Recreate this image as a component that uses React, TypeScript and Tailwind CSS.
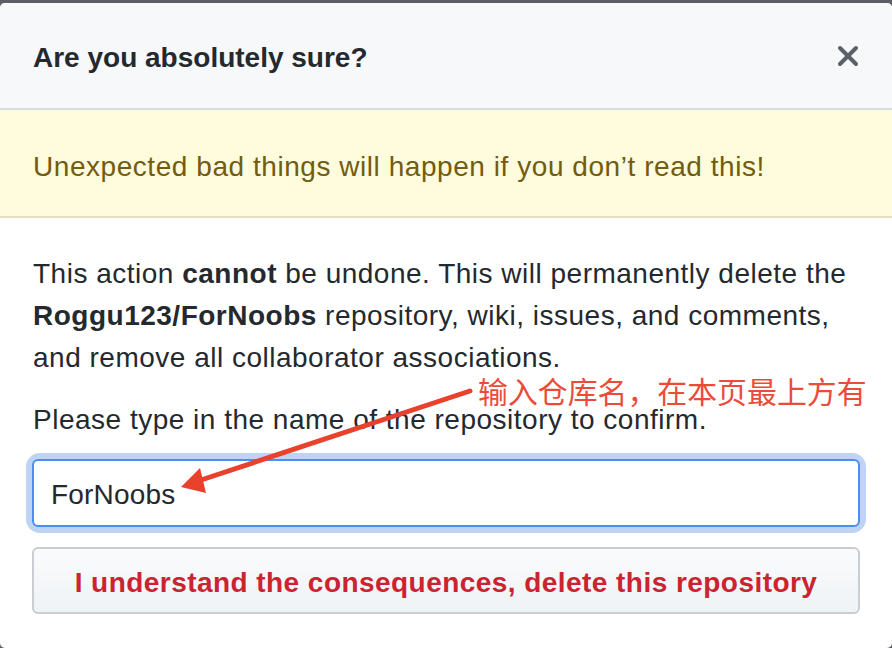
import { X } from "lucide-react";

const font = {
  fontFamily: '"Liberation Sans", Arial, "Noto Sans CJK SC", sans-serif',
};

export default function App() {
  return (
    <div className="relative h-[648px] w-[892px] overflow-hidden bg-[#5b5f64]" style={font}>
      <div className="mt-[3px] flex h-[645px] flex-col overflow-hidden rounded-[5px] bg-white text-[28px] leading-[42px] text-[#24292e]">
        {/* Header */}
        <div className="flex h-[107px] shrink-0 items-center justify-between border-b-2 border-[#d9dce0] bg-[#f6f8fa] pl-[33px] pr-[28px] pt-[4px]">
          <h3 className="font-bold">Are you absolutely sure?</h3>
          <X className="-mt-[4px] text-[#586069]" size={32} strokeWidth={3} />
        </div>

        {/* Flash warning */}
        <div className="flex h-[108px] shrink-0 items-center border-b-2 border-[#e2dfc4] bg-[#fffbdd] px-[33px] pt-[8px] tracking-[0.55px] text-[#735c0f]">
          Unexpected bad things will happen if you don’t read this!
        </div>

        {/* Body */}
        <div className="flex flex-col px-[32px] pt-[35px] tracking-[0.5px]">
          <p className="mb-[20px] pl-px">
            This action <b>cannot</b> be undone. This will permanently delete the{" "}
            <b>Roggu123/ForNoobs</b> repository, wiki, issues, and comments, and remove all
            collaborator associations.
          </p>
          <p className="mb-[18px] pl-px">Please type in the name of the repository to confirm.</p>

          <div className="rounded-[8px] ring-[6px] ring-[#bfd4f4]">
            <div className="flex h-[68px] items-center rounded-[6px] border-2 border-[#4a8ef5] bg-white px-[17px] pt-[4px] text-[28px] tracking-[0.2px]">
              ForNoobs
            </div>
          </div>

          <button className="mt-[20px] h-[67px] rounded-[6px] border-2 border-[#cacdd1] bg-gradient-to-b from-[#fafbfc] to-[#eff3f6] pt-[5px] text-[28px] font-bold tracking-[0.45px] text-[#cb2431]">
            I understand the consequences, delete this repository
          </button>
        </div>
      </div>

      {/* Annotation */}
      <div
        className="pointer-events-none absolute left-[478px] top-[375px] text-[29.9px] leading-[30px] text-[#e94d3a]"
        style={{ fontFamily: '"Noto Sans CJK SC", sans-serif' }}
      >
        输入仓库名，在本页最上方有
      </div>
      <svg className="pointer-events-none absolute inset-0" width="892" height="648">
        <line x1="470" y1="391" x2="198" y2="481" stroke="#e8412c" strokeWidth="5" strokeLinecap="round" />
        <polygon points="181,487 200,468 206,493" fill="#e8412c" />
      </svg>
    </div>
  );
}
